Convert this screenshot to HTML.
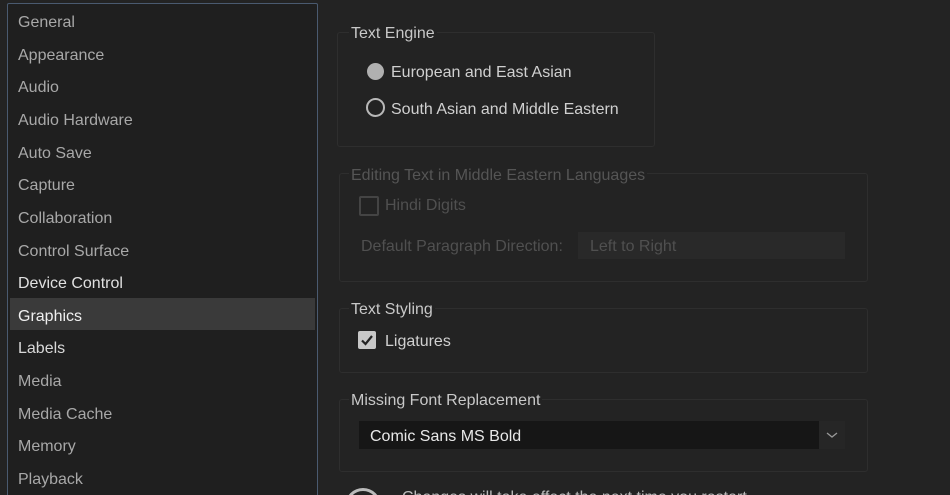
<!DOCTYPE html>
<html style="height:495px;overflow:hidden"><head><style>
html,body{height:495px;overflow:hidden}
body{margin:0;width:950px;background:#232323;position:relative;font-family:"Liberation Sans",sans-serif;font-size:16px;color:#d0d0d0}
.a{position:absolute;white-space:nowrap}
#left{position:absolute;left:7px;top:3px;width:309px;height:500px;border:1px solid #4a5a70;border-radius:2px;background:#1f1f1f}
.it{position:absolute;left:10px;height:20px;line-height:20px;color:#a8a8a8}
.box{position:absolute;border:1px solid #2e2e2e;border-radius:3px}
.t{position:absolute;background:#232323;padding:0 2px;line-height:20px}
</style></head><body>
<div id="left">
<div style="position:absolute;left:2px;top:294px;width:305px;height:32px;background:#3a3a3a"></div>
<div class="it" style="top:9px">General</div>
<div class="it" style="top:42px">Appearance</div>
<div class="it" style="top:74px">Audio</div>
<div class="it" style="top:107px">Audio Hardware</div>
<div class="it" style="top:140px">Auto Save</div>
<div class="it" style="top:172px">Capture</div>
<div class="it" style="top:205px">Collaboration</div>
<div class="it" style="top:238px">Control Surface</div>
<div class="it" style="top:270px;color:#e0e0e0">Device Control</div>
<div class="it" style="top:303px;color:#f0f0f0">Graphics</div>
<div class="it" style="top:335px;color:#d8d8d8">Labels</div>
<div class="it" style="top:368px">Media</div>
<div class="it" style="top:401px">Media Cache</div>
<div class="it" style="top:433px">Memory</div>
<div class="it" style="top:466px">Playback</div>
</div>

<div class="box" style="left:337px;top:32px;width:316px;height:113px"></div>
<div class="t" style="left:349px;top:24px;color:#c8c8c8">Text Engine</div>
<div class="a" style="left:367px;top:63px;width:17px;height:17px;border-radius:50%;background:#b0b0b0"></div>
<div class="a" style="left:391px;top:64px">European and East Asian</div>
<div class="a" style="left:366px;top:98px;width:15px;height:15px;border-radius:50%;border:2px solid #b8b8b8"></div>
<div class="a" style="left:391px;top:101px">South Asian and Middle Eastern</div>

<div class="box" style="left:339px;top:173px;width:527px;height:107px"></div>
<div class="t" style="left:349px;top:166px;color:#555">Editing Text in Middle Eastern Languages</div>
<div class="a" style="left:359px;top:196px;width:16px;height:16px;border:2px solid #444;border-radius:2px"></div>
<div class="a" style="left:385px;top:197px;color:#505050">Hindi Digits</div>
<div class="a" style="left:361px;top:238px;color:#505050">Default Paragraph Direction:</div>
<div class="a" style="left:578px;top:232px;width:267px;height:27px;background:#292929"></div>
<div class="a" style="left:590px;top:238px;color:#505050">Left to Right</div>

<div class="box" style="left:339px;top:308px;width:527px;height:63px"></div>
<div class="t" style="left:349px;top:300px;color:#c8c8c8">Text Styling</div>
<div class="a" style="left:358px;top:331px;width:18px;height:18px;background:#c8c8c8;border-radius:2px"></div>
<svg class="a" style="left:358px;top:331px" width="18" height="18"><path d="M4 9.5 L7.5 13 L14 5" stroke="#222" stroke-width="2.2" fill="none"/></svg>
<div class="a" style="left:385px;top:333px">Ligatures</div>

<div class="box" style="left:339px;top:399px;width:527px;height:71px"></div>
<div class="t" style="left:349px;top:391px;color:#c8c8c8">Missing Font Replacement</div>
<div class="a" style="left:359px;top:421px;width:460px;height:28px;background:#161616"></div>
<div class="a" style="left:819px;top:421px;width:26px;height:28px;background:#262626"></div>
<svg class="a" style="left:825px;top:430px" width="14" height="10"><path d="M2 3 L7 7 L12 3" stroke="#999" stroke-width="1.3" fill="none"/></svg>
<div class="a" style="left:370px;top:428px;color:#e8e8e8">Comic Sans MS Bold</div>

<div class="a" style="left:345px;top:488px;width:30px;height:30px;border-radius:50%;border:3px solid #bbb"></div>
<div class="a" style="left:402px;top:489px;color:#bbb">Changes will take effect the next time you restart</div>
</body></html>
